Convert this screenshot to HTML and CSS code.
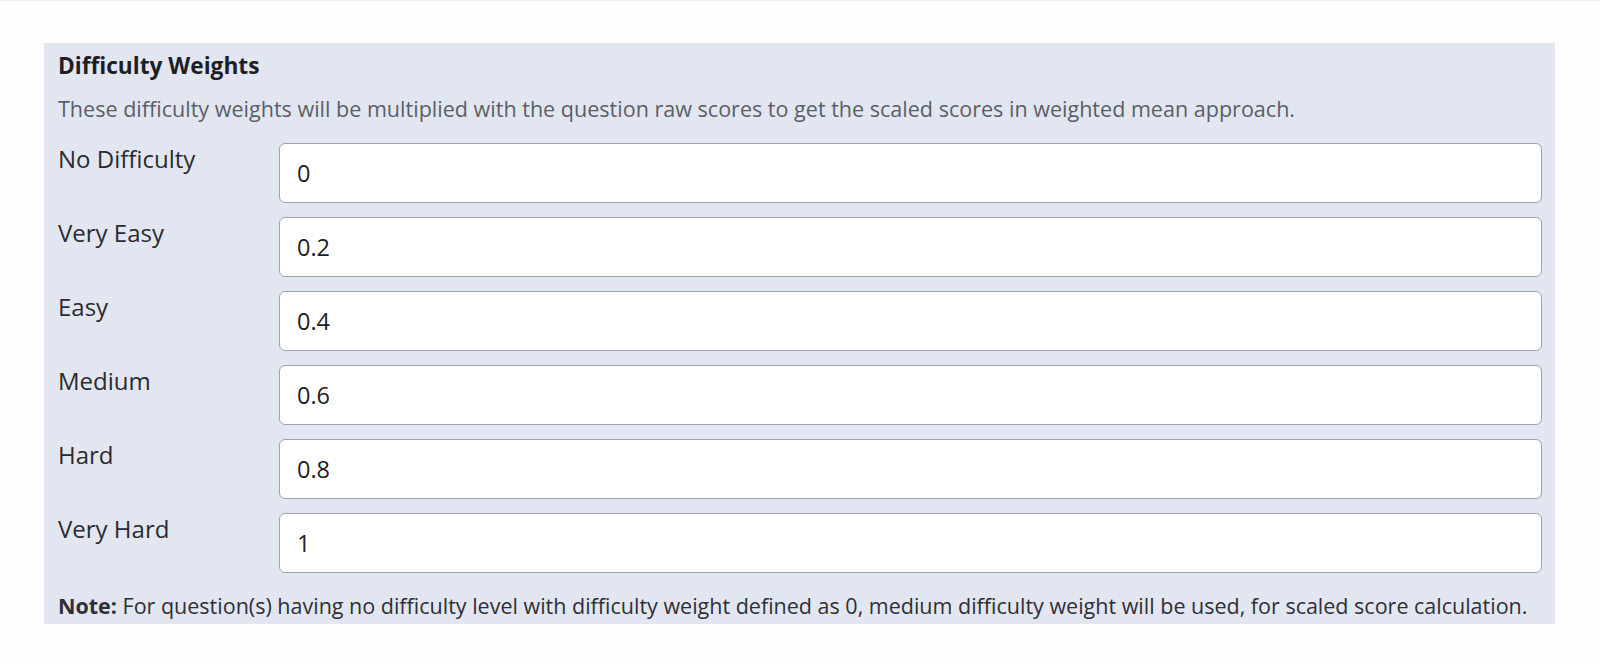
FILE: index.html
```html
<!DOCTYPE html>
<html>
<head>
<meta charset="utf-8">
<link rel="stylesheet" href="styles.css">
</head>
<body>
<div class="page">
  <section class="panel">
    <h2 class="title">Difficulty Weights</h2>
    <p class="desc">These difficulty weights will be multiplied with the question raw scores to get the scaled scores in weighted mean approach.</p>
    <div class="grid">
      <label class="lbl">No Difficulty</label><input class="inp" type="text" value="0">
      <label class="lbl">Very Easy</label><input class="inp" type="text" value="0.2">
      <label class="lbl">Easy</label><input class="inp" type="text" value="0.4">
      <label class="lbl">Medium</label><input class="inp" type="text" value="0.6">
      <label class="lbl">Hard</label><input class="inp" type="text" value="0.8">
      <label class="lbl">Very Hard</label><input class="inp" type="text" value="1">
    </div>
    <p class="note"><b>Note:</b> For question(s) having no difficulty level with difficulty weight defined as 0, medium difficulty weight will be used, for scaled score calculation.</p>
  </section>
</div>
</body>
</html>
```
FILE: styles.css
```css
html, body {
  margin: 0;
  padding: 0;
  background: #fdfdfd;
  font-family: "Open Sans", "Noto Sans", sans-serif;
}
.page {
  border-top: 1px solid #eeeeee;
  padding: 42px 45px 0 44px;
}
.panel {
  background: #e2e6f0;
  padding: 8px 13px 4px 14px;
}
.title {
  margin: 0;
  font-size: 22.7px;
  font-weight: 700;
  color: #1e1f24;
  line-height: 30px;
}
.desc {
  margin: 13.5px 0 0 0;
  font-size: 21.55px;
  color: #5a5f68;
  line-height: 28px;
}
.grid {
  margin-top: 20px;
  display: grid;
  grid-template-columns: 221px 1fr;
  row-gap: 14px;
}
.lbl {
  font-size: 24px;
  color: #2a2b30;
  line-height: 30px;
  padding-top: 1px;
}
.inp {
  box-sizing: border-box;
  height: 60px;
  width: 100%;
  margin: 0;
  border: 1px solid #9ea2ab;
  border-radius: 6px;
  background: #ffffff;
  padding: 0 17px;
  font-family: "Open Sans", "Noto Sans", sans-serif;
  font-size: 23.5px;
  color: #1f2024;
}
.note {
  margin: 19.5px 0 0 0;
  font-size: 21.5px;
  color: #2e3036;
  line-height: 28px;
}
.note b {
  font-weight: 700;
}
```
